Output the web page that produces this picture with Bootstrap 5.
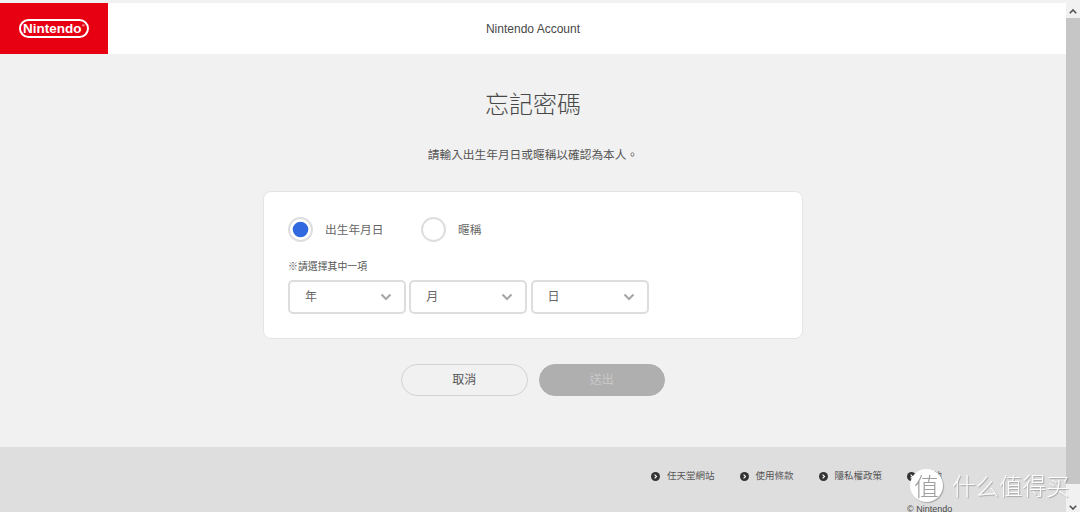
<!DOCTYPE html>
<html lang="zh-Hant">
<head>
  <meta charset="UTF-8">
  <meta name="viewport" content="width=device-width, initial-scale=1.0">
  <title>Nintendo Account</title>
  <link href="https://cdn.jsdelivr.net/npm/bootstrap@5.3.0/dist/css/bootstrap.min.css" rel="stylesheet">
  <style>
    html, body {
      height: 512px;
      overflow: hidden;
    }
    body {
      background-color: #f1f1f1;
      color: #484848;
      font-family: "Liberation Sans", "Noto Sans CJK TC", sans-serif;
    }
    .page-wrap {
      width: 1066px;
      height: 512px;
      overflow: hidden;
      padding-top: 3px;
    }
    .top-bar {
      display: grid;
      grid-template-columns: 108px 1fr 108px;
      height: 51px;
      background: #fff;
    }
    .logo-box {
      background: #e60012;
    }
    .logo-pill {
      width: 70px;
      height: 19px;
      border: 2px solid #fff;
      border-radius: 10px;
      color: #fff;
      font-size: 13.5px;
      font-weight: 700;
      line-height: 1;
    }
    .logo-pill sup {
      font-size: 4px;
      top: -3px;
      margin-left: .5px;
    }
    .top-title {
      font-size: 12px;
      padding-top: 1px;
    }
    .main-area {
      height: 393px;
      padding-top: 37px;
    }
    .page-title {
      font-size: 24px;
      font-weight: 300;
      line-height: 28px;
      margin: 0 0 28px;
    }
    .page-intro {
      font-size: 11.7px;
      line-height: 16px;
      margin: 0 0 28px;
      color: #555;
    }
    .form-panel {
      width: 540px;
      height: 148px;
      margin: 0 auto 25px;
      padding: 25px 24px 0;
      background: #fff;
      border: 1px solid #e4e4e4;
      border-radius: 8px;
    }
    .choice-row {
      height: 25px;
      margin-bottom: 18px;
      gap: 37.5px;
    }
    .choice {
      margin: 0;
      padding: 0;
      min-height: 0;
      font-size: 11.7px;
      color: #666;
    }
    .choice .form-check-input {
      float: none;
      width: 25px;
      height: 25px;
      margin: 0;
      border: 2px solid #ddd;
    }
    .choice .form-check-input:checked {
      background-color: #fff;
      border-color: #ddd;
      background-image: url("data:image/svg+xml,%3csvg xmlns='http://www.w3.org/2000/svg' viewBox='0 0 21 21'%3e%3ccircle cx='10.500' cy='10.500' r='7.800' fill='%233068e0'/%3e%3c/svg%3e");
      background-size: 100% 100%;
    }
    .choice-note {
      font-size: 9.9px;
      line-height: 14px;
      margin-bottom: 6px;
      color: #555;
    }
    .date-row {
      gap: 3.3px;
    }
    .date-select {
      width: 118px;
      height: 34px;
      padding: 0 0 0 15px;
      font-size: 12px;
      color: #666;
      border: 2px solid #ddd;
      border-radius: 5px;
      background-image: url("data:image/svg+xml,%3csvg xmlns='http://www.w3.org/2000/svg' viewBox='0 0 12 8'%3e%3cpath d='M1.500 1.500 6 6l4.500-4.500' fill='none' stroke='%23a8a8a8' stroke-width='2.200'/%3e%3c/svg%3e");
      background-size: 12px 8px;
      background-position: right 12px center;
    }
    .action-row {
      gap: 11px;
    }
    .action-btn {
      width: 126.500px;
      height: 32px;
      padding: 0;
      font-size: 12px;
      line-height: 1;
      border-radius: 16px;
    }
    .btn-cancel {
      color: #555;
      background: #f1f1f1;
      border: 1px solid #d2d2d2;
    }
    .btn-send:disabled {
      color: #c8c8c8;
      background: #afafaf;
      border: 1px solid #afafaf;
      opacity: 1;
    }
    .foot-bar {
      height: 65px;
      padding: 23px 0 0 651px;
      background: #dedede;
    }
    .foot-links {
      gap: 25px;
      font-size: 9.500px;
      line-height: 12px;
      color: #555;
    }
    .foot-links a {
      gap: 7px;
      color: inherit;
      text-decoration: none;
    }
    .foot-dot {
      width: 9px;
      height: 9px;
    }
    .foot-copy {
      font-size: 9px;
      line-height: 10px;
      margin: 22px 0 0 256px;
      white-space: nowrap;
    }
    .fake-scroll {
      position: fixed;
      top: 0;
      right: 0;
      width: 14px;
      height: 512px;
      background: #f1f1f1;
    }
    .scroll-thumb {
      height: 466px;
      margin-top: 18px;
      background: #c6c6c6;
    }
    .scroll-arrow {
      position: absolute;
      left: 3px;
      width: 8px;
      height: 5px;
    }
    .watermark {
      position: fixed;
      left: 910px;
      top: 469px;
      gap: 9px;
      color: rgba(255, 255, 255, .92);
      font-family: "Noto Sans CJK SC", sans-serif;
      white-space: nowrap;
    }
    .wm-circle {
      width: 33px;
      height: 33px;
      border-radius: 50%;
      background: #fff;
      color: #a0a0a0;
      font-size: 25px;
      font-weight: 300;
      line-height: 32px;
      text-align: center;
      box-shadow: 1px 1px 1px rgba(0, 0, 0, .25);
    }
    .wm-text {
      font-size: 23.500px;
      font-weight: 300;
      line-height: 33px;
      text-shadow: 1px 1px 1px rgba(0, 0, 0, .25);
    }
  </style>
</head>
<body>
  <div class="page-wrap">
    <header class="top-bar">
      <div class="logo-box d-flex align-items-center justify-content-center">
        <div class="logo-pill d-flex align-items-center justify-content-center">Nintendo<sup>®</sup></div>
      </div>
      <div class="top-title d-flex align-items-center justify-content-center">Nintendo Account</div>
      <div></div>
    </header>

    <main class="main-area text-center">
      <h1 class="page-title">忘記密碼</h1>
      <p class="page-intro">請輸入出生年月日或暱稱以確認為本人。</p>

      <form class="form-panel text-start">
        <div class="choice-row d-flex">
          <label class="choice form-check d-flex align-items-center gap-2">
            <input class="form-check-input" type="radio" name="kind" checked>
            <span class="ms-1">出生年月日</span>
          </label>
          <label class="choice form-check d-flex align-items-center gap-2">
            <input class="form-check-input" type="radio" name="kind">
            <span class="ms-1">暱稱</span>
          </label>
        </div>
        <div class="choice-note">※請選擇其中一項</div>
        <div class="date-row d-flex">
          <select class="date-select form-select"><option>年</option></select>
          <select class="date-select form-select"><option>月</option></select>
          <select class="date-select form-select"><option>日</option></select>
        </div>
      </form>

      <div class="action-row d-flex justify-content-center">
        <button type="button" class="action-btn btn btn-cancel">取消</button>
        <button type="button" class="action-btn btn btn-send" disabled>送出</button>
      </div>
    </main>

    <footer class="foot-bar">
      <div class="foot-links d-flex">
        <a href="#" class="d-flex align-items-center">
          <svg class="foot-dot" viewBox="0 0 10 10"><circle cx="5" cy="5" r="5" fill="#333"/><path d="M4 2.800 6.200 5 4 7.200" fill="none" stroke="#fff" stroke-width="1.200"/></svg>任天堂網站</a>
        <a href="#" class="d-flex align-items-center">
          <svg class="foot-dot" viewBox="0 0 10 10"><circle cx="5" cy="5" r="5" fill="#333"/><path d="M4 2.800 6.200 5 4 7.200" fill="none" stroke="#fff" stroke-width="1.200"/></svg>使用條款</a>
        <a href="#" class="d-flex align-items-center">
          <svg class="foot-dot" viewBox="0 0 10 10"><circle cx="5" cy="5" r="5" fill="#333"/><path d="M4 2.800 6.200 5 4 7.200" fill="none" stroke="#fff" stroke-width="1.200"/></svg>隱私權政策</a>
        <a href="#" class="d-flex align-items-center">
          <svg class="foot-dot" viewBox="0 0 10 10"><circle cx="5" cy="5" r="5" fill="#333"/><path d="M4 2.800 6.200 5 4 7.200" fill="none" stroke="#fff" stroke-width="1.200"/></svg>其他</a>
      </div>
      <div class="foot-copy">© Nintendo</div>
    </footer>
  </div>

  <div class="fake-scroll">
    <svg class="scroll-arrow" style="top:9px" viewBox="0 0 8 5"><path d="M.8 4.200 4 1l3.200 3.200" fill="none" stroke="#505050" stroke-width="1.600"/></svg>
    <div class="scroll-thumb"></div>
    <svg class="scroll-arrow" style="top:505px" viewBox="0 0 8 5"><path d="M.8.8 4 4 7.200.8" fill="none" stroke="#505050" stroke-width="1.600"/></svg>
  </div>

  <div class="watermark d-flex">
    <div class="wm-circle">值</div>
    <div class="wm-text">什么值得买</div>
  </div>

  <script src="https://cdn.jsdelivr.net/npm/bootstrap@5.3.0/dist/js/bootstrap.bundle.min.js"></script>
</body>
</html>
